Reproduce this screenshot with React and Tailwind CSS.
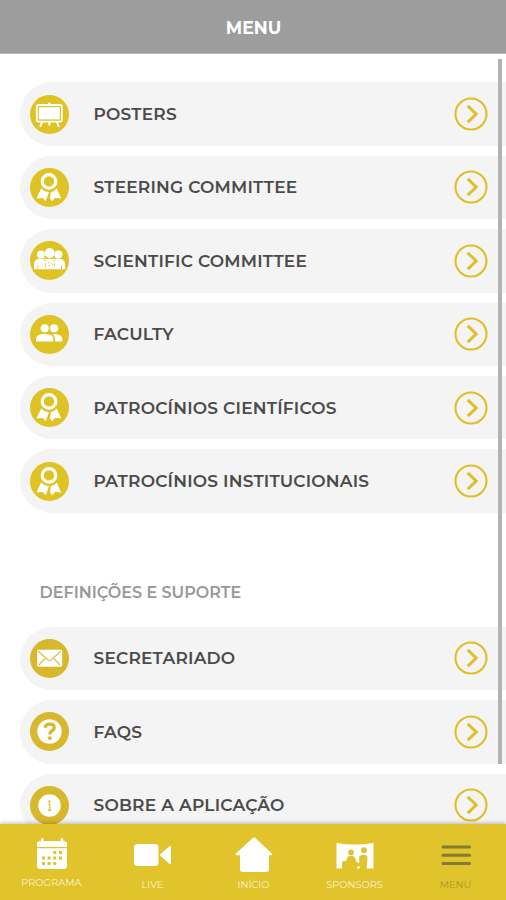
import React from 'react';

const PosterIcon = () => (
  <g fill="none" stroke="#fff">
    <rect x="6.8" y="10" width="25" height="16.6" rx="1.8" strokeWidth="1.8" />
    <rect x="8.8" y="12.2" width="21" height="12.2" fill="#fff" stroke="none" />
    <path d="M19.3 7.5v2.5M19.3 27v3.6M12 27l-1.8 4.8M27 27l1.8 4.8" strokeWidth="2" />
  </g>
);

const RibbonIcon = () => (
  <g fill="#fff">
    <circle cx="19" cy="13.4" r="6.8" fill="none" stroke="#fff" strokeWidth="3.2" />
    <path d="M11.2 20.5Q14.5 24 18.9 23.9L15.8 33.2L12.8 30L6.4 30.6z" />
    <path d="M26.8 20.5Q24 23.6 20.8 24.2L20 30.5L22 33.2L25.2 29.8L31.2 30.6z" />
  </g>
);

const CommitteeIcon = () => (
  <g fill="#fff">
    <circle cx="11" cy="13.6" r="4" />
    <circle cx="28.4" cy="13.6" r="4" />
    <path d="M4 28.2v-4.5q0-5.5 5.3-6h20.4q5.5.5 5.5 6v4.5z" />
    <circle cx="19.7" cy="12" r="4.9" />
    <path d="M14 18.5l2.2 1.8M25.5 18.5l-2.2 1.8M15.3 22v4.5M18 22l1.4-1.5M21.5 22.5l1.5 1.5M18.5 24.5h1.6M24.5 22v3M7.8 24.5v3.5M31.5 24.5v3.5" stroke="#e6cc42" strokeWidth="1" fill="none" />
  </g>
);

const PeopleIcon = () => (
  <g fill="#fff">
    <circle cx="14.7" cy="13.3" r="4.1" />
    <circle cx="24.1" cy="13.3" r="4.1" />
    <path d="M6 26.6v-2.8q0-4.8 8.7-4.8t8.7 4.8v2.8z" />
    <path d="M25.2 26.6v-2.7q0-3-2.8-4.9q10 0 10 4.9v2.7z" />
  </g>
);

const MailIcon = () => (
  <g>
    <rect x="7.2" y="10.8" width="25" height="17" rx="1.4" fill="#fff" />
    <path d="M8 12l10 9q1.5 1 3 0l10-9M9 26l6-6.5M30 26l-6-6.5" fill="none" stroke="#dcc04a" strokeWidth="1.2" />
  </g>
);

const QuestionIcon = () => (
  <g>
    <circle cx="19.5" cy="19.5" r="12.2" fill="#fff" />
    <path d="M15.1 15.8q.4-3.6 4.6-3.6q4.500 0 4.500 3.400q0 2-2.300 3.200q-2 1-2 3.600" fill="none" stroke="#d7b82d" strokeWidth="3.200" />
    <circle cx="19.800" cy="26.200" r="1.900" fill="#d7b82d" />
  </g>
);

const InfoIcon = () => (
  <g>
    <circle cx="19.5" cy="19.5" r="11.2" fill="#fff" />
    <circle cx="19.5" cy="15.5" r="1.3" fill="#dcc352" />
    <path d="M18.2 18.3h1.5v6M18 24.2h3.4" fill="none" stroke="#dcc352" strokeWidth="1.5" />
  </g>
);

const mainItems = [
  { label: 'POSTERS', icon: PosterIcon },
  { label: 'STEERING COMMITTEE', icon: RibbonIcon },
  { label: 'SCIENTIFIC COMMITTEE', icon: CommitteeIcon },
  { label: 'FACULTY', icon: PeopleIcon },
  { label: 'PATROCÍNIOS CIENTÍFICOS', icon: RibbonIcon },
  { label: 'PATROCÍNIOS INSTITUCIONAIS', icon: RibbonIcon },
];

const supportItems = [
  { label: 'SECRETARIADO', icon: MailIcon },
  { label: 'FAQS', icon: QuestionIcon },
  { label: 'SOBRE A APLICAÇÃO', icon: InfoIcon },
];

const MenuRow = ({ item, color }) => {
  const Icon = item.icon;
  return (
    <button className="flex h-[63.4px] w-full shrink-0 items-center rounded-l-full bg-[#f4f4f4] pr-[18px] pl-[9.5px] text-left">
      <svg viewBox="0 0 39 39" className="size-[39px] shrink-0">
        <circle cx="19.5" cy="19.5" r="19.5" fill={color} />
        <Icon />
      </svg>
      <span className="ml-[25px] flex-1 pt-[1.5px] text-[17px] font-semibold tracking-[0.2px] whitespace-nowrap text-[#4b4b4b]">
        {item.label}
      </span>
      <svg viewBox="0 0 34 34" className="size-[34px] shrink-0" fill="none" stroke="#e0bf24">
        <circle cx="17" cy="17" r="15.5" strokeWidth="2.1" />
        <path d="M13.7 8.8L22.2 17L13.7 25.2" strokeWidth="3" />
      </svg>
    </button>
  );
};

const CalendarIcon = () => (
  <svg viewBox="0 0 40 36" className="h-[36px] w-[40px]" fill="#fff">
    <path d="M5 10V6.5Q5 4 8 4h1V2.2q0-1.2 1.3-1.2t1.3 1.2V4h17V2.2q0-1.2 1.3-1.2t1.3 1.2V4H32q3 0 3 2.5V10z" />
    <path d="M5 11.2h30V29q0 3-3 3H8q-3 0-3-3z" />
    <path d="M21.3 15.5h3M27 15.5h3M10 21h3M15.6 21h3M21.3 21h3M27 21h3M10 26.6h3M15.6 26.6h3M21.3 26.6h3" stroke="#e1c32b" strokeWidth="3" />
  </svg>
);

const CameraIcon = () => (
  <svg viewBox="0 0 40 36" className="h-[36px] w-[40px]" fill="#fff">
    <rect x="1" y="7" width="24.5" height="22" rx="3.5" />
    <path d="M26.5 18L36 9.5q2-1.2 2 .8v15.4q0 2-2 .8z" />
  </svg>
);

const HouseIcon = () => (
  <svg viewBox="0 0 40 36" className="h-[36px] w-[40px]" fill="#fff">
    <path d="M18.5 1.2q1.5-1.2 3 0L38 16.5q1 1.7-.8 1.7H35V32q0 3-3 3H9q-3 0-3-3V18.2H2.8Q1 18.2 2 16.5z" />
  </svg>
);

const SponsorsIcon = () => (
  <svg viewBox="0 0 40 36" className="h-[36px] w-[40px]">
    <path d="M1.5 6q18.5 3 37 0v25.5H1.5z" fill="#fff" />
    <g fill="#e1c32b">
      <circle cx="16" cy="15.5" r="2.9" />
      <circle cx="29" cy="13.2" r="2.9" />
      <path d="M7 32v-5.5l1-2.5h3l1.5-4 2.5-1h3l2.5 2.5 1 4h3l-.5-5q.5-2.5 3-2.5h3q2.5 0 2.5 3l-1 11z" />
    </g>
    <path d="M22 29.5h3v2h-3z" fill="#fff" />
  </svg>
);

const BurgerIcon = () => (
  <svg viewBox="0 0 40 36" className="h-[36px] w-[40px]" stroke="#857933" strokeWidth="3" strokeLinecap="round">
    <path d="M7 10h26.5M7 18.3h26.5M7 26.6h26.5" />
  </svg>
);

const tabs = [
  { label: 'PROGRAMA', icon: CalendarIcon, style: 'mt-[3px] text-[#faf4d4]' },
  { label: 'LIVE', icon: CameraIcon, style: 'mt-[5px] text-[#faf4d4]' },
  { label: 'INÍCIO', icon: HouseIcon, style: 'mt-[5px] text-[#faf4d4]' },
  { label: 'SPONSORS', icon: SponsorsIcon, style: 'mt-[5px] text-[#faf4d4]' },
  { label: 'MENU', icon: BurgerIcon, style: 'mt-[5px] text-[#ad982e]' },
];

const App = () => {
  return (
    <div className="relative flex h-[900px] w-full flex-col overflow-hidden bg-white font-['Montserrat','Inter',sans-serif]">
      <header className="flex h-[54px] shrink-0 items-center justify-center border-b border-[#b8b8b8] bg-[#9d9d9d] pt-[2px] pl-px">
        <h1 className="text-[17.2px] font-bold text-white">MENU</h1>
      </header>

      <main className="flex h-[770px] shrink-0 flex-col overflow-hidden pt-[28.4px] pl-[20px]">
        <div className="flex flex-col gap-[10px]">
          {mainItems.map((item) => (
            <MenuRow key={item.label} item={item} color="#dfc324" />
          ))}
        </div>

        <h2 className="mt-[68.5px] mb-[21.5px] ml-[19.5px] h-[24px] text-[16px] leading-[24px] font-semibold text-[#989898]">
          DEFINIÇÕES E SUPORTE
        </h2>

        <div className="flex flex-col gap-[10px]">
          {supportItems.map((item) => (
            <MenuRow key={item.label} item={item} color="#d7b82d" />
          ))}
        </div>
      </main>

      {/* Scroll indicator */}
      <div className="absolute top-[59px] right-[4px] h-[705px] w-[4px] bg-[#b3b3b3]" />

      <nav className="relative flex h-[76px] shrink-0 bg-[#e1c32b] pt-[13px] pl-px shadow-[0_-1px_4px_rgba(0,0,0,0.25)]">
        {tabs.map(({ label, icon: Icon, style }) => (
          <button key={label} className="flex flex-1 flex-col items-center justify-start">
            <Icon />
            <span className={`text-[9.8px] leading-[14px] ${style}`}>{label}</span>
          </button>
        ))}
      </nav>
    </div>
  );
};

export default App;
